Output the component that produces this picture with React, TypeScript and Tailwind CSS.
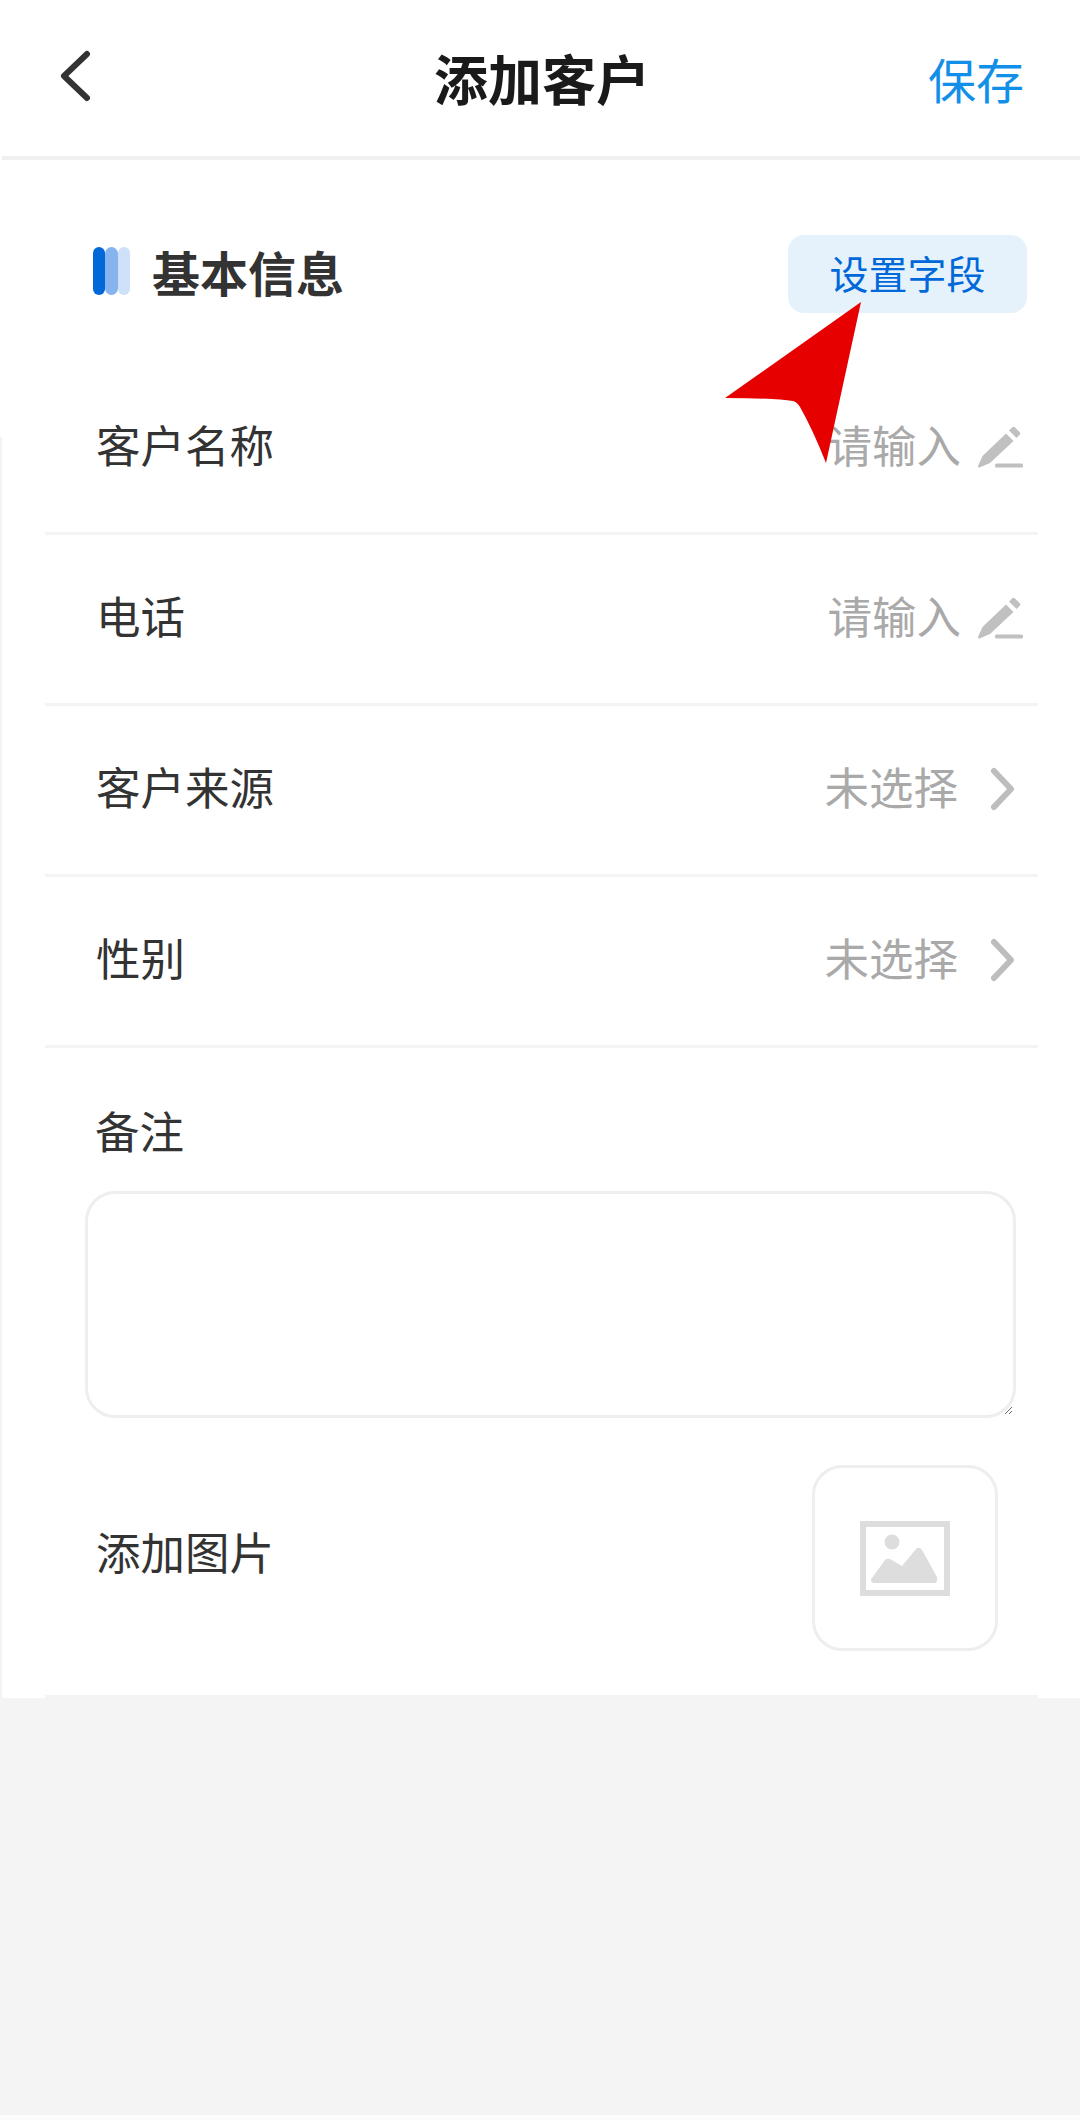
import React from "react";

const font = { fontFamily: '"Noto Sans CJK SC", "Liberation Sans", sans-serif' };

function Pencil() {
  return (
    <svg width="45" height="42" viewBox="0 0 45 42" fill="#c0c0c0" className="shrink-0">
      <path d="M31 4.500 L34 1.500 Q35.500 0 37 1.500 L41.500 6 Q43 7.500 41.500 9 L38.500 12 Z" />
      <path d="M28 7.500 L35.500 15 L12 37 L1.500 41.500 Q-0.500 42 0.200 39.500 L4.500 30 Z" />
      <rect x="17" y="37.500" width="28" height="4" rx="1.500" />
    </svg>
  );
}

function Chevron() {
  return (
    <svg width="26" height="44" viewBox="0 0 26 44" fill="none" stroke="#bdbdbd" strokeWidth="6" strokeLinecap="round" strokeLinejoin="round" className="shrink-0">
      <path d="M5 4 L22 22 L5 40" />
    </svg>
  );
}

function Row({ label, value, icon }: { label: string; value: string; icon: "pencil" | "chevron" }) {
  return (
    <div className="ml-[45px] mr-[42px] flex h-[171px] items-center justify-between border-b-[3px] border-[#f4f4f4] pb-[2px] pl-[51px] pr-[15px]">
      <span className="-mt-[5px] text-[44.5px] leading-none text-[#333333]">{label}</span>
      <div className="flex items-center">
        <span className={`-mt-[5px] text-[44.5px] leading-none text-[#a9a9a9] ${icon === "pencil" ? "mr-[17px]" : "mr-[31px]"}`}>{value}</span>
        {icon === "pencil" ? <Pencil /> : <span className="mr-[8px] flex"><Chevron /></span>}
      </div>
    </div>
  );
}

export default function App() {
  return (
    <div style={font} className="relative flex h-[2120px] w-[1080px] flex-col overflow-hidden bg-white">
      <header className="relative ml-[2px] flex h-[160px] shrink-0 items-center justify-between border-b-4 border-[#f0f0f0] pl-[58px] pr-[56px]">
        <svg width="32" height="54" viewBox="0 0 32 54" fill="none" stroke="#333333" strokeWidth="6" strokeLinecap="round" strokeLinejoin="round" className="-mt-[4px]">
          <path d="M27 5 L4 27 L27 49" />
        </svg>
        <h1 className="absolute left-[432px] top-[47px] text-[54px] font-bold leading-[62px] text-[#1a1a1a]">添加客户</h1>
        <span className="-mt-[1px] text-[48px] leading-none text-[#118fe9]">保存</span>
      </header>

      <section className="flex h-[204px] shrink-0 items-start justify-between pl-[93px] pr-[53px] pt-[75px]">
        <div className="flex items-center pt-[12px]">
          <div className="flex h-[48px] w-[37px]">
            <div className="h-full w-[12px] rounded-full bg-[#0068d9]" />
            <div className="h-full w-[13px] rounded-full bg-[#85b4ee]" />
            <div className="h-full w-[12px] rounded-full bg-[#cfe1f8]" />
          </div>
          <h2 className="ml-[22px] text-[48px] font-bold leading-none text-[#333333]">基本信息</h2>
        </div>
        <button className="flex h-[78px] w-[239px] items-center justify-center rounded-[16px] bg-[#e5f2fc] pb-[3px] text-[39px] leading-none text-[#0068d9]">
          设置字段
        </button>
      </section>

      <Row label="客户名称" value="请输入" icon="pencil" />
      <Row label="电话" value="请输入" icon="pencil" />
      <Row label="客户来源" value="未选择" icon="chevron" />
      <Row label="性别" value="未选择" icon="chevron" />

      <div className="pl-[95px] pt-[57px] text-[44.5px] leading-[50px] text-[#333333]">备注</div>
      <div className="pl-[85px] pr-[64px] pt-[36px]">
        <textarea className="block h-[227px] w-full rounded-[30px] border-[3px] border-[#eeeeee] bg-white outline-none" />
      </div>

      <div className="flex h-[280px] shrink-0 items-center justify-between pl-[96px] pr-[82px]">
        <span className="-mt-[14px] text-[44.5px] leading-none text-[#333333]">添加图片</span>
        <div className="flex h-[186px] w-[186px] items-center justify-center rounded-[30px] border-[3px] border-[#eeeeee]">
          <svg width="90" height="75" viewBox="0 0 90 75">
            <rect x="3" y="3" width="84" height="69" fill="none" stroke="#dddddd" strokeWidth="6" />
            <circle cx="32" cy="21" r="7.500" fill="#dddddd" />
            <path d="M12 57 L25 39 Q27 37 30 38 L42 45 L56 28 Q59 25 62 29 L77 56 Q78 62 74 62 L14 62 Q9 61 12 57 Z" fill="#dddddd" />
          </svg>
        </div>
      </div>

      <div className="flex-1 bg-[#f4f4f4]" />
      <div className="h-[5px] shrink-0 bg-[#fcfcfc]" />

      <div className="absolute left-0 top-[437px] h-[1261px] w-[2px] bg-[#f3f3f3]" />
      <div className="absolute left-[45px] top-[1695px] h-[3px] w-[993px] bg-[#f4f4f4]" />
      <svg className="absolute left-[725px] top-[302px]" width="137" height="162" viewBox="0 0 137 162">
        <path d="M136 0 L0 96 Q50 96 68 99 Q72 100 75 105 Q88 128 101 161 Z" fill="#e60000" />
      </svg>
    </div>
  );
}
